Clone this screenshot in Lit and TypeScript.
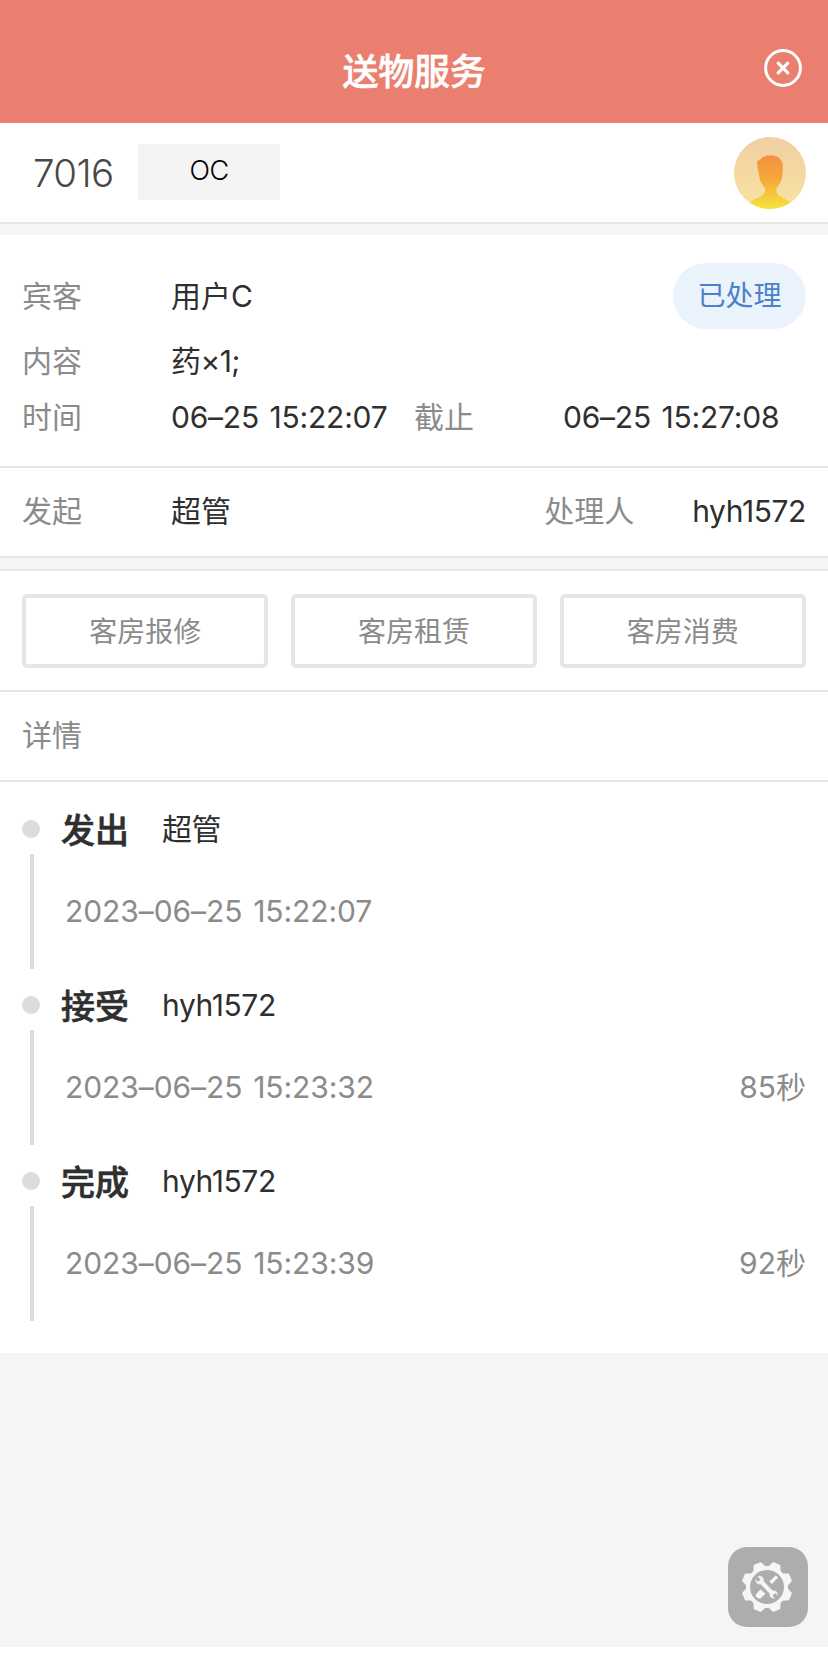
import { LitElement, html, css, svg } from "lit";
import { customElement, property } from "lit/decorators.js";

interface Step {
  action: string;
  user: string;
  time: string;
  cost?: string;
}

const STEPS: Step[] = [
  { action: "发出", user: "超管", time: "2023–06–25 15:22:07" },
  { action: "接受", user: "hyh1572", time: "2023–06–25 15:23:32", cost: "85秒" },
  { action: "完成", user: "hyh1572", time: "2023–06–25 15:23:39", cost: "92秒" },
];

const ACTIONS = ["客房报修", "客房租赁", "客房消费"];

@customElement("timeline-step")
export class TimelineStep extends LitElement {
  @property({ attribute: false }) step!: Step;

  static styles = css`
    :host {
      display: grid;
      grid-template-columns: 18px 1fr;
      column-gap: 21px;
      height: 176px;
      box-sizing: border-box;
    }
    .rail {
      display: flex;
      flex-direction: column;
      align-items: center;
      padding-top: 15px;
    }
    .dot {
      width: 18px;
      height: 18px;
      border-radius: 50%;
      background: #dcdcdc;
    }
    .line {
      width: 4px;
      height: 115px;
      margin: 16px 0 0 2px;
      background: #dcdcdc;
    }
    .head {
      display: flex;
      align-items: center;
      height: 48px;
      white-space: nowrap;
      color: #2f2f2f;
    }
    .action {
      flex: 0 0 101px;
      padding-top: 3px;
      font-size: 34px;
      font-weight: 500;
      -webkit-text-stroke: 0.6px #2f2f2f;
    }
    .user {
      margin-top: -1px;
      letter-spacing: -0.4px;
    }
    .meta {
      display: flex;
      justify-content: space-between;
      align-items: center;
      height: 48px;
      padding: 34px 0 0 4px;
      color: #8b8b8b;
    }
    .time {
      word-spacing: 2.5px;
      letter-spacing: -0.08px;
    }
  `;

  render() {
    const s = this.step;
    return html`
      <div class="rail"><i class="dot"></i><i class="line"></i></div>
      <div>
        <div class="head"><span class="action">${s.action}</span><span class="user">${s.user}</span></div>
        <div class="meta"><span class="time">${s.time}</span><span>${s.cost ?? ""}</span></div>
      </div>
    `;
  }
}

@customElement("app-root")
export class AppRoot extends LitElement {
  static styles = css`
    :host {
      display: flex;
      flex-direction: column;
      height: 1670px;
      background: #fff;
      font-family: Inter, "Noto Sans CJK SC", sans-serif;
      font-size: 30px;
      font-weight: 370;
      line-height: 44px;
      color: #2f2f2f;
      overflow: hidden;
    }
    * {
      box-sizing: border-box;
    }
    svg {
      display: block;
    }
    .header {
      display: grid;
      grid-template-columns: 1fr auto 1fr;
      align-items: center;
      height: 123px;
      padding: 20px 25px 0;
      background: #ea7f6f;
      color: #fff;
    }
    .title {
      grid-column: 2;
      font-size: 36px;
      font-weight: 500;
      letter-spacing: -0.2px;
      -webkit-text-stroke: 0.5px #fff;
    }
    .close {
      justify-self: end;
      margin-bottom: 7px;
    }
    .room {
      display: flex;
      align-items: center;
      height: 101px;
      padding: 0 22px 0 33px;
      border-bottom: 2px solid #e6e6e6;
    }
    .number {
      width: 105px;
      font-size: 38.5px;
      font-weight: 350;
      letter-spacing: -0.6px;
      color: #484848;
    }
    .state {
      width: 142px;
      height: 56px;
      margin-bottom: 1px;
      line-height: 54px;
      text-align: center;
      font-size: 27px;
      font-weight: 350;
      letter-spacing: -0.5px;
      background: #f4f4f4;
      color: #000;
    }
    .avatar {
      margin-left: auto;
    }
    .band {
      height: 11px;
      background: #f5f5f5;
    }
    .info {
      height: 233px;
      padding: 27px 22px 0;
      border-bottom: 2px solid #e6e6e6;
    }
    .row {
      display: flex;
      align-items: center;
      white-space: nowrap;
    }
    .guest {
      height: 67px;
    }
    .content {
      height: 64px;
    }
    .times {
      height: 47px;
    }
    .label {
      width: 149px;
      color: #8b8b8b;
    }
    .items {
      letter-spacing: -0.6px;
    }
    .moment {
      word-spacing: 2.5px;
      letter-spacing: -0.23px;
    }
    .start {
      width: 243px;
    }
    .until {
      width: 149px;
    }
    .pill {
      margin-left: auto;
      width: 133px;
      height: 66px;
      border-radius: 33px;
      line-height: 66px;
      text-align: center;
      font-size: 28px;
      color: #4a82c8;
      background: #eaf2fc;
    }
    .people {
      height: 90px;
      padding: 0 22px 2px;
      border-bottom: 2px solid #e6e6e6;
    }
    .handler {
      margin: 0 58px 0 auto;
      color: #8b8b8b;
    }
    .account {
      letter-spacing: -0.4px;
    }
    .actions {
      display: grid;
      grid-template-columns: repeat(3, 1fr);
      gap: 22.5px;
      height: 123px;
      padding: 23px 22px 0;
      border-top: 2px solid #e6e6e6;
      border-bottom: 2px solid #e6e6e6;
    }
    .action {
      display: flex;
      align-items: center;
      justify-content: center;
      height: 74px;
      padding-top: 1px;
      border: 4px solid #e6e6e6;
      border-radius: 5px;
      font-size: 28px;
      color: #8b8b8b;
    }
    .details {
      height: 90px;
      padding: 0 22px 2px;
      border-bottom: 2px solid #e6e6e6;
    }
    .timeline {
      height: 571px;
      padding: 23px 22px 0;
    }
    .rest {
      height: 294px;
      display: flex;
      justify-content: flex-end;
      align-items: flex-end;
      padding: 0 20px 20px 0;
      background: #f5f5f5;
    }
  `;

  private closeIcon() {
    return html`<svg class="close" width="40" height="40" viewBox="0 0 40 40" fill="none" stroke="#fff" stroke-linecap="round">
      <circle cx="20" cy="20" r="17.4" stroke-width="3" />
      <path d="M15.2 15.2 24.8 24.8M24.8 15.2 15.2 24.8" stroke-width="3.2" />
    </svg>`;
  }

  private avatar() {
    return html`<svg class="avatar" width="72" height="72" viewBox="0 0 72 72">
      <defs>
        <linearGradient id="bg" x1="0" y1="0" x2="0" y2="1">
          <stop offset="0" stop-color="#f0cfa2" />
          <stop offset="1" stop-color="#f8e3a2" />
        </linearGradient>
        <linearGradient id="person" gradientUnits="userSpaceOnUse" x1="0" y1="18" x2="0" y2="72">
          <stop offset="0" stop-color="#f3903f" />
          <stop offset="0.45" stop-color="#f5a83c" />
          <stop offset="1" stop-color="#f7e43e" />
        </linearGradient>
        <clipPath id="round"><circle cx="36" cy="36" r="36" /></clipPath>
      </defs>
      <g clip-path="url(#round)">
        <rect width="72" height="72" fill="url(#bg)" />
        <path
          fill="url(#person)"
          d="M23 25C23.6 23.5 25 23 26.3 22.5C28.5 19.8 32 18.2 36.5 18.2C44 18.2 48.9 22.5 48.9 30C48.9 37 48.4 45 42.5 51V54.5C43.3 60 51 60.5 56 65.5V73H16V65.5C21 60.5 30.2 60 31 54.5V51C26.5 46.5 25.2 41 24.6 35C23.6 33.5 23.4 31 23.6 28.5Z"
        />
      </g>
    </svg>`;
  }

  private toolsIcon() {
    const teeth = [22.5, 67.5, 112.5, 157.5, 202.5, 247.5, 292.5, 337.5];
    return html`<svg width="80" height="80" viewBox="0 0 80 80">
      <rect width="80" height="80" rx="19" fill="#adadad" />
      <g transform="translate(39 40)">
        <g fill="#f6f6f6" stroke="#f6f6f6" stroke-width="2" stroke-linejoin="round">
          <circle r="20" />
          ${teeth.map((a) => svg`<path transform="rotate(${a})" d="M-6-18.5 -3.3-24.4H3.3L6-18.5Z" />`)}
        </g>
        <circle r="17" fill="#adadad" />
        <g fill="#f6f6f6">
          <path d="M8.8-11.8 11-9.6 5-3 2.4-5.4Z" />
          <path d="M-6.6 2.4-1.4 6.6-6.6 11.4Q-9 12-11.4 9Q-11.6 7.4-6.6 2.4Z" />
          <path
            stroke="#adadad"
            stroke-width="0.6"
            d="M-8-11.2C-5-11.6-2.6-9.4-3-5.8L5.6 3.2C9 2.8 11.6 5.4 11 9L8.2 6.6 5.8 8.6 8.2 11.6C4.4 12.2 1.8 9.8 2.2 6.4L-6.4-2.4C-10-2-12.4-4.6-11.8-8L-9-5.6-6.8-7.6-10-10.4Z"
          />
        </g>
      </g>
    </svg>`;
  }

  render() {
    return html`
      <header class="header"><span class="title">送物服务</span>${this.closeIcon()}</header>
      <section class="room">
        <span class="number">7016</span>
        <span class="state">OC</span>
        ${this.avatar()}
      </section>
      <div class="band"></div>
      <section class="info">
        <div class="row guest"><span class="label">宾客</span><span>用户C</span><span class="pill">已处理</span></div>
        <div class="row content"><span class="label">内容</span><span class="items">药×1;</span></div>
        <div class="row times">
          <span class="label">时间</span><span class="moment start">06–25 15:22:07</span>
          <span class="label until">截止</span><span class="moment">06–25 15:27:08</span>
        </div>
      </section>
      <section class="row people">
        <span class="label">发起</span><span>超管</span>
        <span class="handler">处理人</span><span class="account">hyh1572</span>
      </section>
      <div class="band"></div>
      <section class="actions">${ACTIONS.map((a) => html`<div class="action">${a}</div>`)}</section>
      <section class="row details"><span class="label">详情</span></section>
      <section class="timeline">${STEPS.map((s) => html`<timeline-step .step=${s}></timeline-step>`)}</section>
      <footer class="rest">${this.toolsIcon()}</footer>
    `;
  }
}
